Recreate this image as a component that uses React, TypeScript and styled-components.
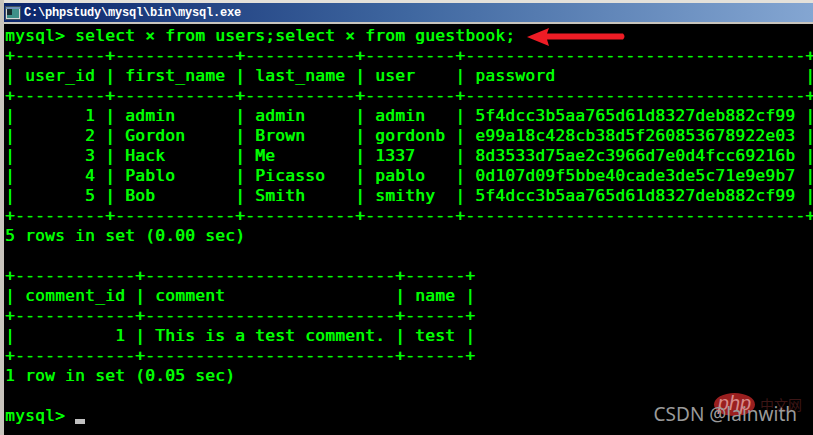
import React from 'react'
import styled, { createGlobalStyle } from 'styled-components'

const Global = createGlobalStyle`
  html, body {
    margin: 0;
    padding: 0;
    background: #000;
    overflow: hidden;
  }
`

const Screen = styled.div`
  position: relative;
  width: 813px;
  height: 435px;
  overflow: hidden;
  background: #000;
  display: flex;
  flex-direction: column;
  border-left: 4px solid #c8c4bc;
  box-sizing: border-box;
`

const TitleBar = styled.div`
  flex: none;
  height: 19px;
  padding-left: 1px;
  display: flex;
  align-items: center;
  gap: 3px;
  background: linear-gradient(90deg, #0a246a 0%, #3f67a0 50%, #84a6d2 100%);
  border-top: 3px solid #e4e1da;
  border-bottom: 2px solid #c8c4bc;
`

const TitleText = styled.span`
  font-family: 'Liberation Mono', monospace;
  font-weight: 700;
  font-size: 12px;
  letter-spacing: -0.2px;
  color: #fff;
  white-space: pre;
`

const Body = styled.div`
  flex: 1;
  padding: 2px 0 0 1px;
  min-width: 0;
`

const Line = styled.div`
  height: 20px;
  line-height: 20px;
  font-family: 'DejaVu Sans Mono', monospace;
  font-size: 16px;
  letter-spacing: 0.37px;
  color: #00ff00;
  text-shadow: 0.6px 0 0 #00ff00;
  white-space: pre;
`

const Cursor = styled.span`
  display: inline-block;
  width: 10px;
  height: 5px;
  background: #c0c0c0;
  vertical-align: -3px;
`

const Arrow = styled.svg`
  position: absolute;
  left: 521px;
  top: 26px;
`

const Watermark = styled.div`
  position: absolute;
  right: 16px;
  top: 402px;
  font-family: 'Noto Sans', sans-serif;
  font-size: 19px;
  line-height: 24px;
  color: #9a9a9a;
  white-space: pre;
`

const PhpBadge = styled.div`
  position: absolute;
  left: 710px;
  top: 393px;
  width: 41px;
  height: 23px;
  border-radius: 50%;
  background: #9a1f1f;
  color: #d88a8a;
  font-family: 'Liberation Sans', sans-serif;
  font-style: italic;
  font-size: 20px;
  line-height: 20px;
  text-align: center;
`

const PhpCn = styled.div`
  position: absolute;
  left: 756px;
  top: 394px;
  font-family: 'Noto Sans CJK SC', sans-serif;
  font-size: 14px;
  line-height: 20px;
  color: #3c1616;
`

const rule1 = '+---------+------------+-----------+---------+----------------------------------+'
const rule2 = '+------------+-------------------------+------+'

const lines = [
  'mysql> select × from users;select × from guestbook;',
  rule1,
  '| user_id | first_name | last_name | user    | password                         |',
  rule1,
  '|       1 | admin      | admin     | admin   | 5f4dcc3b5aa765d61d8327deb882cf99 |',
  '|       2 | Gordon     | Brown     | gordonb | e99a18c428cb38d5f260853678922e03 |',
  '|       3 | Hack       | Me        | 1337    | 8d3533d75ae2c3966d7e0d4fcc69216b |',
  '|       4 | Pablo      | Picasso   | pablo   | 0d107d09f5bbe40cade3de5c71e9e9b7 |',
  '|       5 | Bob        | Smith     | smithy  | 5f4dcc3b5aa765d61d8327deb882cf99 |',
  rule1,
  '5 rows in set (0.00 sec)',
  ' ',
  rule2,
  '| comment_id | comment                 | name |',
  rule2,
  '|          1 | This is a test comment. | test |',
  rule2,
  '1 row in set (0.05 sec)',
  ' ',
]

const ConsoleIcon = () => (
  <svg width="16" height="16" viewBox="0 0 16 16">
    <rect x="0.5" y="1.5" width="15" height="13" fill="#d8d8d8" stroke="#40505f" />
    <rect x="2" y="4" width="12" height="9" fill="#3f8f88" />
    <rect x="2" y="4" width="5" height="6" fill="#1a2a30" />
    <rect x="1" y="2" width="14" height="2" fill="#6f8fb8" />
  </svg>
)

const App = () => (
  <Screen>
    <Global />
    <TitleBar>
      <ConsoleIcon />
      <TitleText>C:\phpstudy\mysql\bin\mysql.exe</TitleText>
    </TitleBar>
    <Body>
      {lines.map((text, i) => (
        <Line key={i}>{text}</Line>
      ))}
      <Line>
        {'mysql> '}
        <Cursor />
      </Line>
    </Body>
    <Arrow width="106" height="22" viewBox="0 0 106 22">
      <path d="M2 11 L24 2 L22 7.5 L98 7.5 Q101 10.5 98 13.5 L22 13.5 L24 20 Z" fill="#ee1c25" />
    </Arrow>
    <PhpBadge>php</PhpBadge>
    <PhpCn>中文网</PhpCn>
    <Watermark>CSDN @lainwith</Watermark>
  </Screen>
)

export default App
